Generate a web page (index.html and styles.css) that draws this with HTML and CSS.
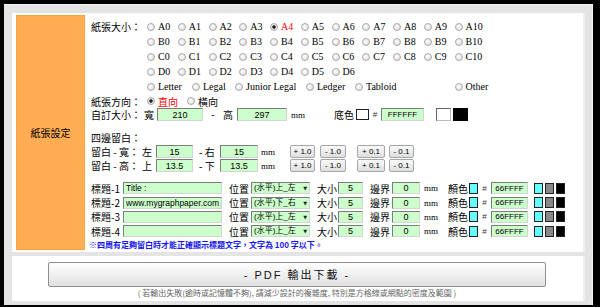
FILE: index.html
```html
<!DOCTYPE html>
<html lang="zh-Hant">

<head>
  <meta charset="UTF-8">
  <title>方格紙設定</title>
  <link rel="stylesheet" href="styles.css">
</head>

<body>
  <div class="frame">
    <div class="panel">
      <div class="side">紙張設定</div>

      <div class="main">
        <div class="sizes">
          <div class="lbl lbl-size">紙張大小：</div>
          <div class="paper-grid">
            <label class="opt"><input type="radio" name="paper"><span>A0</span></label>
            <label class="opt"><input type="radio" name="paper"><span>A1</span></label>
            <label class="opt"><input type="radio" name="paper"><span>A2</span></label>
            <label class="opt"><input type="radio" name="paper"><span>A3</span></label>
            <label class="opt"><input type="radio" name="paper" checked><span class="on">A4</span></label>
            <label class="opt"><input type="radio" name="paper"><span>A5</span></label>
            <label class="opt"><input type="radio" name="paper"><span>A6</span></label>
            <label class="opt"><input type="radio" name="paper"><span>A7</span></label>
            <label class="opt"><input type="radio" name="paper"><span>A8</span></label>
            <label class="opt"><input type="radio" name="paper"><span>A9</span></label>
            <label class="opt"><input type="radio" name="paper"><span>A10</span></label>

            <label class="opt"><input type="radio" name="paper"><span>B0</span></label>
            <label class="opt"><input type="radio" name="paper"><span>B1</span></label>
            <label class="opt"><input type="radio" name="paper"><span>B2</span></label>
            <label class="opt"><input type="radio" name="paper"><span>B3</span></label>
            <label class="opt"><input type="radio" name="paper"><span>B4</span></label>
            <label class="opt"><input type="radio" name="paper"><span>B5</span></label>
            <label class="opt"><input type="radio" name="paper"><span>B6</span></label>
            <label class="opt"><input type="radio" name="paper"><span>B7</span></label>
            <label class="opt"><input type="radio" name="paper"><span>B8</span></label>
            <label class="opt"><input type="radio" name="paper"><span>B9</span></label>
            <label class="opt"><input type="radio" name="paper"><span>B10</span></label>

            <label class="opt"><input type="radio" name="paper"><span>C0</span></label>
            <label class="opt"><input type="radio" name="paper"><span>C1</span></label>
            <label class="opt"><input type="radio" name="paper"><span>C2</span></label>
            <label class="opt"><input type="radio" name="paper"><span>C3</span></label>
            <label class="opt"><input type="radio" name="paper"><span>C4</span></label>
            <label class="opt"><input type="radio" name="paper"><span>C5</span></label>
            <label class="opt"><input type="radio" name="paper"><span>C6</span></label>
            <label class="opt"><input type="radio" name="paper"><span>C7</span></label>
            <label class="opt"><input type="radio" name="paper"><span>C8</span></label>
            <label class="opt"><input type="radio" name="paper"><span>C9</span></label>
            <label class="opt"><input type="radio" name="paper"><span>C10</span></label>

            <label class="opt"><input type="radio" name="paper"><span>D0</span></label>
            <label class="opt"><input type="radio" name="paper"><span>D1</span></label>
            <label class="opt"><input type="radio" name="paper"><span>D2</span></label>
            <label class="opt"><input type="radio" name="paper"><span>D3</span></label>
            <label class="opt"><input type="radio" name="paper"><span>D4</span></label>
            <label class="opt"><input type="radio" name="paper"><span>D5</span></label>
            <label class="opt"><input type="radio" name="paper"><span>D6</span></label>
            <div class="blank"></div>

            <div class="us-row">
              <label class="opt w-letter"><input type="radio" name="paper"><span>Letter</span></label>
              <label class="opt w-legal"><input type="radio" name="paper"><span>Legal</span></label>
              <label class="opt w-junior"><input type="radio" name="paper"><span>Junior Legal</span></label>
              <label class="opt w-ledger"><input type="radio" name="paper"><span>Ledger</span></label>
              <label class="opt"><input type="radio" name="paper"><span>Tabloid</span></label>
            </div>
            <label class="opt"><input type="radio" name="paper"><span>Other</span></label>
          </div>
        </div>

        <div class="row row-dir">
          <div class="lbl lbl-size">紙張方向：</div>
          <label class="opt w-dir"><input type="radio" name="dir" checked><span class="on">直向</span></label>
          <label class="opt"><input type="radio" name="dir"><span>橫向</span></label>
        </div>

        <div class="row row-custom">
          <div class="lbl lbl-custom">自訂大小：</div>
          <span class="w-kuan">寬</span>
          <input class="field num w-46" value="210">
          <span class="w-dash">-</span>
          <span class="w-gao">高</span>
          <input class="field num w-50" value="297">
          <span class="unit w-mm1">mm</span>
          <span class="w-bg">底色</span>
          <span class="chip chip-bg"></span>
          <span class="hash w-hash1">#</span>
          <input class="field hex w-43" value="FFFFFF">
          <span class="swatch sw-white"></span>
          <span class="swatch sw-black"></span>
        </div>

        <div class="row row-margin-title">
          <div class="lbl">四邊留白：</div>
        </div>

        <div class="row row-margin">
          <div class="lbl lbl-margin">留白 - 寬：</div>
          <span class="w-side">左</span>
          <input class="field num w-37" value="15">
          <span class="w-dash2">- 右</span>
          <input class="field num w-38" value="15">
          <span class="unit w-mm2">mm</span>
          <div class="steps">
            <button class="step s-1">+ 1.0</button>
            <button class="step s-2">- 1.0</button>
            <button class="step s-3">+ 0.1</button>
            <button class="step s-4">- 0.1</button>
          </div>
        </div>

        <div class="row row-margin">
          <div class="lbl lbl-margin">留白 - 高：</div>
          <span class="w-side">上</span>
          <input class="field num w-37" value="13.5">
          <span class="w-dash2">- 下</span>
          <input class="field num w-38" value="13.5">
          <span class="unit w-mm2">mm</span>
          <div class="steps">
            <button class="step s-1">+ 1.0</button>
            <button class="step s-2">- 1.0</button>
            <button class="step s-3">+ 0.1</button>
            <button class="step s-4">- 0.1</button>
          </div>
        </div>

        <div class="titles">
          <div class="row row-title">
            <span class="lbl-title">標題-1</span>
            <input class="field text" value="Title :">
            <span class="w-pos">位置</span>
            <span class="pick-wrap"><select class="pick"><option>(水平)上_左</option></select></span>
            <span class="w-fs">大小</span>
            <input class="field num w-25" value="5">
            <span class="w-edge">邊界</span>
            <input class="field num w-28" value="0">
            <span class="unit w-mm3">mm</span>
            <span class="w-color">顏色</span>
            <span class="chip chip-cyan"></span>
            <span class="hash w-hash2">#</span>
            <input class="field hex w-37" value="66FFFF">
            <span class="mini cyan"></span>
            <span class="mini gray"></span>
            <span class="mini black"></span>
          </div>

          <div class="row row-title">
            <span class="lbl-title">標題-2</span>
            <input class="field text" value="www.mygraphpaper.com">
            <span class="w-pos">位置</span>
            <span class="pick-wrap"><select class="pick"><option>(水平)下_右</option></select></span>
            <span class="w-fs">大小</span>
            <input class="field num w-25" value="5">
            <span class="w-edge">邊界</span>
            <input class="field num w-28" value="0">
            <span class="unit w-mm3">mm</span>
            <span class="w-color">顏色</span>
            <span class="chip chip-cyan"></span>
            <span class="hash w-hash2">#</span>
            <input class="field hex w-37" value="66FFFF">
            <span class="mini cyan"></span>
            <span class="mini gray"></span>
            <span class="mini black"></span>
          </div>

          <div class="row row-title">
            <span class="lbl-title">標題-3</span>
            <input class="field text" value="">
            <span class="w-pos">位置</span>
            <span class="pick-wrap"><select class="pick"><option>(水平)上_左</option></select></span>
            <span class="w-fs">大小</span>
            <input class="field num w-25" value="5">
            <span class="w-edge">邊界</span>
            <input class="field num w-28" value="0">
            <span class="unit w-mm3">mm</span>
            <span class="w-color">顏色</span>
            <span class="chip chip-cyan"></span>
            <span class="hash w-hash2">#</span>
            <input class="field hex w-37" value="66FFFF">
            <span class="mini cyan"></span>
            <span class="mini gray"></span>
            <span class="mini black"></span>
          </div>

          <div class="row row-title">
            <span class="lbl-title">標題-4</span>
            <input class="field text" value="">
            <span class="w-pos">位置</span>
            <span class="pick-wrap"><select class="pick"><option>(水平)上_左</option></select></span>
            <span class="w-fs">大小</span>
            <input class="field num w-25" value="5">
            <span class="w-edge">邊界</span>
            <input class="field num w-28" value="0">
            <span class="unit w-mm3">mm</span>
            <span class="w-color">顏色</span>
            <span class="chip chip-cyan"></span>
            <span class="hash w-hash2">#</span>
            <input class="field hex w-37" value="66FFFF">
            <span class="mini cyan"></span>
            <span class="mini gray"></span>
            <span class="mini black"></span>
          </div>
        </div>

        <p class="note">※四周有足夠留白時才能正確顯示標題文字，文字為 100 字以下。</p>
      </div>
    </div>

    <div class="panel panel-output">
      <button class="pdf-btn">- PDF 輸出下載 -</button>
      <p class="caption">( 若輸出失敗(逾時或記憶體不夠), 請減少設計的複雜度, 特別是方格線或網點的密度及範圍 )</p>
    </div>
  </div>
</body>

</html>
```

FILE: styles.css
```css
body {
  margin: 0;
  background: #000;
  font-family: "Liberation Serif", "Noto Sans CJK TC", serif;
  font-size: 10px;
  color: #000;
}

.frame {
  margin: 4px 7px 0 4px;
  padding: 8px 7px 4px 8px;
  background: #e4e4e4;
  border-top: 1px solid #f4f4f4;
  border-right: 1px solid #f4f4f4;
}

.panel {
  display: flex;
  gap: 5px;
  padding: 2px 4px;
  background: #fff;
  border-right: 2px solid #efefef;
}

.side {
  width: 67px;
  background: #ffac52;
  border: 1px solid #f9a243;
  display: flex;
  align-items: center;
  justify-content: center;
  font-family: "Noto Sans CJK TC", sans-serif;
  font-size: 10px;
}

.main {
  flex: 1;
  padding: 4px 0 0 1px;
}

/* paper size block */
.sizes {
  display: flex;
}

.lbl {
  font-family: "Noto Sans CJK TC", sans-serif;
  font-size: 10px;
  line-height: 15px;
  white-space: nowrap;
}

.lbl-size {
  width: 56px;
  flex-shrink: 0;
}

.paper-grid {
  display: grid;
  grid-template-columns: repeat(11, 30.75px);
  grid-auto-rows: 15px;
}

.blank {
  grid-column: span 4;
}

.us-row {
  grid-column: span 10;
  display: flex;
}

.opt {
  display: flex;
  align-items: center;
  gap: 3px;
  white-space: nowrap;
  line-height: 15px;
}

.opt input {
  appearance: none;
  margin: 0;
  width: 8px;
  height: 8px;
  flex-shrink: 0;
  box-sizing: border-box;
  border: 1px solid #a9a9a9;
  border-radius: 50%;
  background: radial-gradient(circle at 40% 40%, #fff, #d6d6d6);
}

.opt input:checked {
  background: radial-gradient(circle, #222 0 1.4px, #e8e8e8 2px);
}

.on {
  color: #f00;
}

.w-letter { width: 45px; }
.w-legal { width: 43px; }
.w-junior { width: 71px; }
.w-ledger { width: 49px; }

/* generic rows */
.row {
  display: flex;
  align-items: center;
  white-space: nowrap;
}

.row-dir {
  height: 14px;
}

.row-dir .opt span {
  font-family: "Noto Sans CJK TC", sans-serif;
}

.w-dir { width: 40px; }

.row-custom {
  height: 13px;
}

.lbl-custom { width: 53px; }

.field {
  box-sizing: border-box;
  height: 13px;
  margin: 0;
  padding: 0 2px;
  background: #ccffcc;
  border: 1px solid;
  border-color: #7c7c7c #d4d4d4 #d4d4d4 #7c7c7c;
  font-family: "Liberation Sans", sans-serif;
  font-size: 9px;
  color: #000;
  outline: none;
}

.num,
.hex {
  text-align: center;
}

.hex {
  font-size: 8px;
}

.w-25 { width: 25px; }
.w-28 { width: 28px; }
.w-37 { width: 37px; }
.w-38 { width: 38px; }
.w-43 { width: 43px; }
.w-46 { width: 46px; }
.w-50 { width: 50px; }

.w-kuan { width: 13px; }
.w-dash { width: 20px; text-align: center; }
.w-gao { width: 14px; }
.w-mm1 { width: 43px; padding-left: 4px; }
.w-bg { width: 22px; }

.unit {
  font-size: 9px;
}

.hash {
  font-family: "Liberation Sans", sans-serif;
  font-size: 8px;
  text-align: center;
  color: #333;
}

.w-hash1 { width: 12px; }
.w-hash2 { width: 13px; }

.chip {
  box-sizing: border-box;
  border: 1px solid #222;
}

.chip-bg {
  width: 13px;
  height: 11px;
  background: #fff;
}

.swatch {
  box-sizing: border-box;
  width: 15px;
  height: 13px;
}

.sw-white {
  margin-left: 12px;
  background: #fff;
  border: 1px solid;
  border-color: #666 #bbb #bbb #666;
}

.sw-black {
  margin-left: 2px;
  background: #000;
}

/* margins */
.row-margin-title {
  height: 13px;
  margin-top: 10px;
}

.row-margin {
  height: 13px;
  margin-top: 1px;
}

.lbl-margin { width: 51px; }
.w-side { width: 14px; }
.w-dash2 { width: 21px; padding-left: 6px; }
.w-mm2 { width: 29px; padding-left: 3px; }

.steps {
  display: flex;
}

.step {
  box-sizing: border-box;
  height: 13px;
  margin: 0;
  padding: 0;
  background: linear-gradient(#fbfbfb, #dedede);
  border: 1px solid #a6a6a6;
  border-radius: 2px;
  font-family: "Liberation Sans", sans-serif;
  font-size: 8px;
  color: #000;
}

.s-1 { width: 25px; }
.s-2 { width: 26px; margin-left: 5px; }
.s-3 { width: 28px; margin-left: 11px; }
.s-4 { width: 25px; margin-left: 4px; }

/* titles */
.titles {
  margin-top: 9px;
}

.row-title {
  height: 14.4px;
}

.row-title .field {
  height: 12px;
}

.lbl-title {
  width: 32px;
  font-family: "Noto Sans CJK TC", sans-serif;
}

.text {
  width: 99px;
  text-align: left;
  font-size: 8.5px;
}

.w-pos { width: 22px; margin-left: 7px; }

.pick-wrap {
  position: relative;
  display: flex;
}

.pick-wrap::after {
  content: "▼";
  position: absolute;
  right: 3px;
  top: 0;
  font-family: "DejaVu Sans", sans-serif;
  font-size: 5px;
  line-height: 12px;
  color: #222;
  pointer-events: none;
}

.pick {
  appearance: none;
  box-sizing: border-box;
  width: 59px;
  height: 12px;
  margin: 0;
  padding: 0 0 0 2px;
  background: #ccffcc;
  border: 1px solid;
  border-color: #7c7c7c #d4d4d4 #d4d4d4 #7c7c7c;
  font-family: "Liberation Sans", "Noto Sans CJK TC", sans-serif;
  font-size: 8px;
  line-height: 10px;
  color: #000;
}

.w-fs { width: 21px; margin-left: 7px; }
.w-edge { width: 22px; margin-left: 7px; }
.w-mm3 { width: 24px; padding-left: 4px; }
.w-color { width: 21px; }

.chip-cyan {
  width: 9px;
  height: 11px;
  background: #66ffff;
}

.mini {
  box-sizing: border-box;
  width: 9px;
  height: 11px;
  margin-left: 2px;
  border: 1px solid #222;
}

.mini.cyan {
  margin-left: 6px;
  background: #66ffff;
}

.mini.gray {
  background: #888;
}

.mini.black {
  background: #000;
}

.note {
  margin: 0 0 0 -2px;
  height: 11px;
  line-height: 11px;
  font-family: "Noto Sans CJK TC", sans-serif;
  font-size: 8px;
  font-weight: bold;
  color: #1515f0;
}

/* output */
.panel-output {
  margin-top: 4px;
  padding: 6px 37px 3px 36px;
  flex-direction: column;
  align-items: stretch;
  gap: 0;
}

.pdf-btn {
  height: 25px;
  margin: 0;
  background: linear-gradient(#fff, #e0e0e0);
  border: 1px solid #8f8f8f;
  border-radius: 2px;
  font-family: "Liberation Sans", "Noto Sans CJK TC", sans-serif;
  font-size: 11px;
  letter-spacing: 2px;
  color: #111;
}

.caption {
  margin: 1px 0 0;
  text-align: center;
  font-family: "Noto Sans CJK TC", sans-serif;
  font-size: 8px;
  line-height: 10px;
  color: #666;
}
```
